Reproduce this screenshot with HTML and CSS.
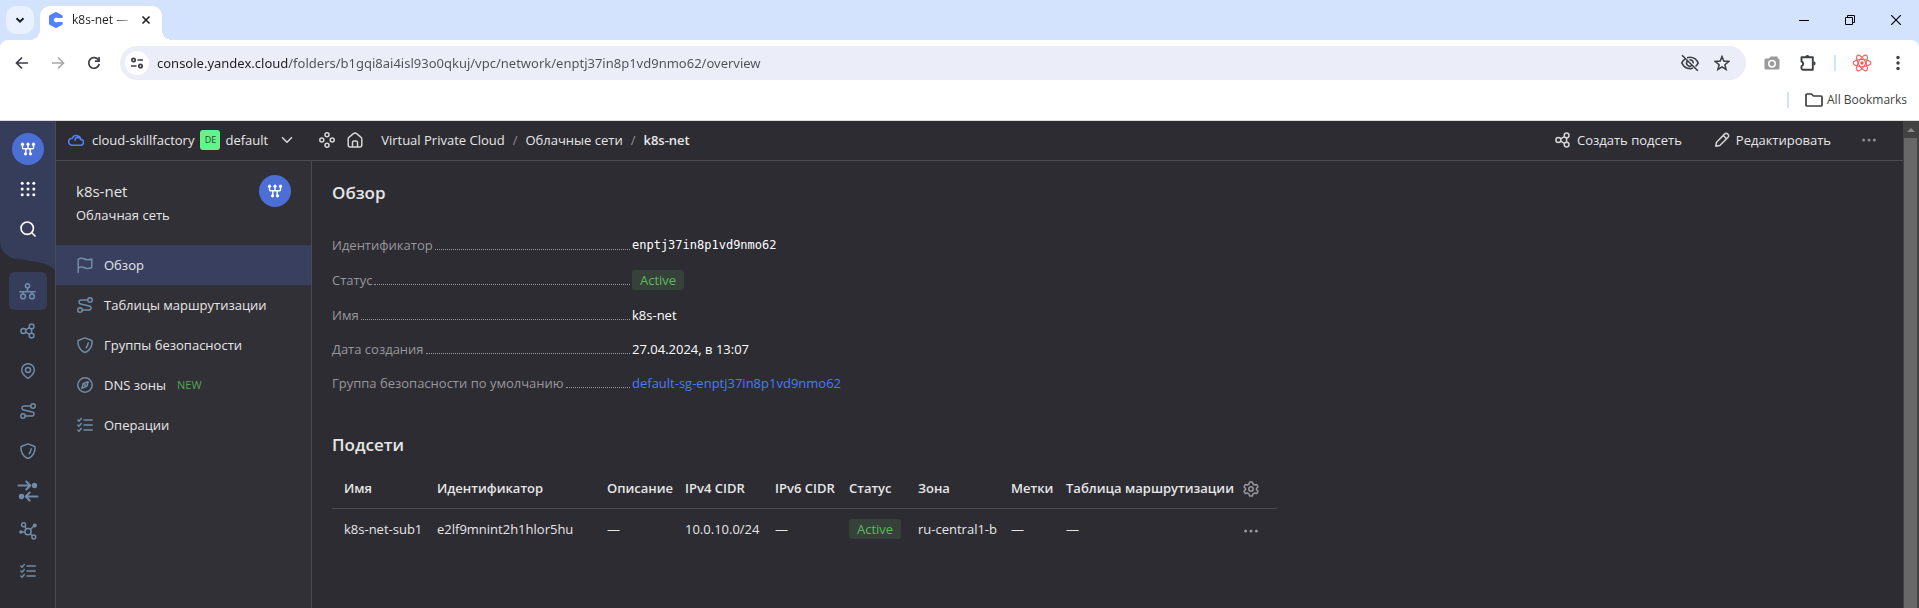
FILE: index.html
```html
<!DOCTYPE html>
<html lang="ru">
<head>
<meta charset="utf-8">
<title>k8s-net — Virtual Private Cloud</title>
<meta name="viewport" content="width=device-width, initial-scale=1">
<link rel="stylesheet" href="styles.css">
</head>
<body>
<svg class="sprite" aria-hidden="true">
  <symbol id="i-vpc" viewBox="0 0 16 16"><g fill="none" stroke="currentColor" stroke-width="1.4"><path d="M2.500 3v3.800a1 1 0 0 0 1 1h9a1 1 0 0 0 1-1V3M8 3v4.800M5.800 7.800v5.200M10.200 7.800v5.200"/></g><g fill="currentColor"><circle cx="2.500" cy="3.200" r="1.600"/><circle cx="8" cy="3.200" r="1.600"/><circle cx="13.500" cy="3.200" r="1.600"/><circle cx="5.500" cy="12.800" r="1.600"/><circle cx="10.500" cy="12.800" r="1.600"/></g></symbol>
  <symbol id="i-grid" viewBox="0 0 16 16"><g fill="currentColor"><circle cx="2.2" cy="2.2" r="1.5"/><circle cx="8" cy="2.2" r="1.5"/><circle cx="13.8" cy="2.2" r="1.5"/><circle cx="2.2" cy="8" r="1.5"/><circle cx="8" cy="8" r="1.5"/><circle cx="13.8" cy="8" r="1.5"/><circle cx="2.2" cy="13.8" r="1.5"/><circle cx="8" cy="13.8" r="1.5"/><circle cx="13.8" cy="13.8" r="1.5"/></g></symbol>
  <symbol id="i-search" viewBox="0 0 16 16"><g fill="none" stroke="currentColor" stroke-width="1.6" stroke-linecap="round"><circle cx="7.2" cy="7.2" r="6.2"/><path d="m11.8 11.8 3.2 3.2"/></g></symbol>
  <symbol id="i-net" viewBox="0 0 16 16"><g fill="none" stroke="currentColor" stroke-width="1.5" stroke-linecap="round"><circle cx="8" cy="2.7" r="2"/><path d="M8 4.700v3.600M.8 8.300h14.400M3.800 8.300v1.700M12.200 8.300v1.700"/><circle cx="3.800" cy="12.600" r="2.200"/><circle cx="12.200" cy="12.600" r="2.200"/></g></symbol>
  <symbol id="i-share" viewBox="0 0 16 16"><g fill="none" stroke="currentColor" stroke-width="1.500"><circle cx="3.400" cy="8" r="2.500"/><circle cx="11.600" cy="3.400" r="2.400"/><circle cx="11.600" cy="12.600" r="2.400"/><path d="m5.700 6.800 3.700-2.200M5.700 9.200l3.700 2.200M11.600 5.800v4.400" /></g></symbol>
  <symbol id="i-pin" viewBox="0 0 16 16"><g fill="none" stroke="currentColor" stroke-width="1.500" stroke-linejoin="round"><path d="M14.300 7c0 3.600-3.700 6.600-5.500 7.900a1.300 1.300 0 0 1-1.600 0C5.400 13.600 1.700 10.600 1.700 7a6.300 6.300 0 0 1 12.600 0Z"/><circle cx="8" cy="7" r="2.500"/></g></symbol>
  <symbol id="i-route" viewBox="0 0 16 16"><g fill="none" stroke="currentColor" stroke-width="1.500" stroke-linecap="round"><circle cx="13" cy="3" r="2.250"/><circle cx="3" cy="13" r="2.250"/><path d="M10.700 3H4.300a2 2 0 0 0-.6 4l8.600 2a2 2 0 0 1-.6 4H5.300"/></g></symbol>
  <symbol id="i-shield" viewBox="0 0 16 16"><g fill="none" stroke="currentColor" stroke-width="1.500" stroke-linecap="round" stroke-linejoin="round"><path d="m8 .9 6.200 2.300c.6.200.9.700.9 1.300 0 4.500-2 8.400-6 10.500a2.300 2.300 0 0 1-2.200 0c-4-2.100-6-6-6-10.500 0-.6.300-1.100.9-1.300L8 .9Z"/><path d="M11.200 5.800c-.2 2-.9 3.700-2 4.900"/></g></symbol>
  <symbol id="i-swap" viewBox="0 0 22 22"><g fill="none" stroke="currentColor" stroke-width="2" stroke-linecap="round" stroke-linejoin="round"><path d="M1.500 5.500H13M9.300 1.500l4 4-4 4M20.500 16.500H9M12.700 12.500l-4 4 4 4"/></g><g fill="currentColor"><circle cx="17.500" cy="5.500" r="2.700"/><circle cx="4.500" cy="16.500" r="2.700"/></g></symbol>
  <symbol id="i-hub" viewBox="0 0 18 18"><g fill="none" stroke="currentColor" stroke-width="1.500"><circle cx="9" cy="9.700" r="3.100"/><circle cx="4.600" cy="2.800" r="2"/><circle cx="14.800" cy="15" r="1.900"/><path d="m5.700 4.500 1.700 2.600M11.300 7.500l3.400-3.200M5.900 10H2M11.200 11.800l2.200 2"/></g><g fill="currentColor"><circle cx="15.700" cy="3.400" r="2"/><circle cx="1.900" cy="10" r="1.800"/></g></symbol>
  <symbol id="i-list" viewBox="0 0 16 16"><g fill="none" stroke="currentColor" stroke-width="1.400" stroke-linecap="round" stroke-linejoin="round"><path d="M7 3h8.300M7 8h8.300M7 13h8.300M.8 3.100 2 4.300l2.300-2.800M.8 8.100 2 9.300l2.300-2.800M.8 13.100 2 14.300l2.300-2.800"/></g></symbol>
  <symbol id="i-flag" viewBox="0 0 16 16"><path d="M1.200 15.300V2.400c2-1.800 4-1.500 6.300-.4 2.500 1.200 4.500 1.100 7.300 0v8.500c-2.800 1.300-4.800 1.500-7.300.3-2.300-1.100-4.300-1.200-6.300.3" fill="none" stroke="currentColor" stroke-width="1.500" stroke-linecap="round" stroke-linejoin="round"/></symbol>
  <symbol id="i-compass" viewBox="0 0 16 16"><g fill="none" stroke="currentColor" stroke-width="1.500" stroke-linejoin="round"><circle cx="8" cy="8" r="7.200"/><path d="M11.200 4.800 9.800 9.300 4.800 11.200l1.500-4.700Z"/></g><circle cx="8" cy="8" r="1" fill="currentColor"/></symbol>
  <symbol id="i-cloud" viewBox="0 0 16 16"><path d="M3.800 13.200h8.600a2.900 2.900 0 0 0 .4-5.800A4.500 4.500 0 0 0 4.300 6.200 3.500 3.500 0 0 0 3.800 13.200ZM7 8.200a2.900 2.900 0 0 1 5.600-.8" fill="none" stroke="currentColor" stroke-width="1.500" stroke-linecap="round"/></symbol>
  <symbol id="i-down" viewBox="0 0 16 16"><path d="m3.500 5.700 4.500 4.500 4.500-4.500" fill="none" stroke="currentColor" stroke-width="1.600" stroke-linecap="round" stroke-linejoin="round"/></symbol>
  <symbol id="i-four" viewBox="0 0 16 16"><g fill="none" stroke="currentColor" stroke-width="1.500"><circle cx="8" cy="2.800" r="2"/><circle cx="8" cy="13.200" r="2"/><circle cx="2.800" cy="8" r="2"/><circle cx="13.200" cy="8" r="2"/></g></symbol>
  <symbol id="i-home" viewBox="0 0 16 16"><g fill="none" stroke="currentColor" stroke-width="1.500" stroke-linejoin="round"><path d="M1.200 7.200c0-.8.300-1.500 1-2L6.400 1.700a2.500 2.500 0 0 1 3.200 0l4.200 3.500c.7.500 1 1.200 1 2V13a2 2 0 0 1-2 2H3.200a2 2 0 0 1-2-2Z"/><path d="M5.500 15v-4.500a1.500 1.500 0 0 1 1.500-1.500h2a1.500 1.500 0 0 1 1.500 1.500V15"/></g></symbol>
  <symbol id="i-pencil" viewBox="0 0 16 16"><path d="m1.800 14.200.7-4L10.800 1.900a1.900 1.900 0 0 1 2.700 0l.6.600a1.900 1.900 0 0 1 0 2.700L5.800 13.500ZM9.300 3.500l3.200 3.200" fill="none" stroke="currentColor" stroke-width="1.500" stroke-linejoin="round"/></symbol>
  <symbol id="i-more" viewBox="0 0 16 16"><g fill="currentColor"><circle cx="2.600" cy="8" r="1.500"/><circle cx="8" cy="8" r="1.500"/><circle cx="13.400" cy="8" r="1.500"/></g></symbol>
  <symbol id="i-gear" viewBox="0 0 16 16"><g fill="none" stroke="currentColor" stroke-width="1.500" stroke-linejoin="round"><path d="M6.700 1h2.600l.7 2.100 1.500.9 2.200-.5 1.300 2.300-1.500 1.600v1.300l1.500 1.600-1.300 2.300-2.200-.5-1.500.8-.7 2.100H6.700L6 12.900l-1.500-.8-2.200.5L1 10.300l1.500-1.600V7.400L1 5.800l1.300-2.300 2.200.5L6 3.100Z"/><circle cx="8" cy="8" r="2.200"/></g></symbol>
</svg>

<header class="browser">
  <div class="tabstrip">
    <button class="tab-search" aria-label="Search tabs"><svg width="12" height="12" viewBox="0 0 12 12"><path d="m2.500 4.200 3.500 3.500 3.500-3.500" fill="none" stroke="currentColor" stroke-width="2"/></svg></button>
    <div class="tab">
      <svg width="16" height="16" viewBox="0 0 16 16"><path d="M8 0q.7 0 1.300.4l4.500 2.700q.9.500.9 1.500V6H9.600a2.400 2.400 0 1 0 0 4h5.100v1.400q0 1-.9 1.500l-4.500 2.700Q8 16.400 6.700 15.600l-4.800-2.700Q1 12.400 1 11.400V4.600q0-1 .9-1.500L6.700.4Q7.300 0 8 0Z" fill="#5282ff"/></svg>
      <span class="tab-title">k8s-net —</span>
      <button class="tab-close" aria-label="Close tab"><svg width="10" height="10" viewBox="0 0 10 10"><path d="m1.500 1.500 7 7m0-7-7 7" stroke="currentColor" stroke-width="1.600"/></svg></button>
    </div>
    <div class="window-controls">
      <button aria-label="Minimize"><svg width="10" height="10" viewBox="0 0 10 10"><path d="M0 5.500h10" stroke="currentColor"/></svg></button>
      <button aria-label="Restore"><svg width="10" height="10" viewBox="0 0 10 10"><path d="M.5 2.500h7v7h-7ZM2.500 2.500v-2h7v7h-2" fill="none" stroke="currentColor"/></svg></button>
      <button aria-label="Close"><svg width="10" height="10" viewBox="0 0 10 10"><path d="m0 0 10 10M10 0 0 10" stroke="currentColor" stroke-width="1.200"/></svg></button>
    </div>
  </div>
  <div class="toolbar">
    <button class="tool" aria-label="Back"><svg width="16" height="16" viewBox="0 0 16 16"><path d="M14 8H3M8 2.500 2.500 8 8 13.500" fill="none" stroke="currentColor" stroke-width="1.700"/></svg></button>
    <button class="tool faded" aria-label="Forward"><svg width="16" height="16" viewBox="0 0 16 16"><path d="M2 8h11M8 2.500 13.500 8 8 13.500" fill="none" stroke="currentColor" stroke-width="1.700"/></svg></button>
    <button class="tool" aria-label="Reload"><svg width="16" height="16" viewBox="0 0 16 16"><path d="M12.500 5.100A5.300 5.300 0 1 0 13.200 9" fill="none" stroke="currentColor" stroke-width="1.700"/><path d="M13.900 1.900v5H8.900V5.300h3.300V1.900Z" fill="currentColor"/></svg></button>
    <div class="address">
      <button class="site-info" aria-label="Site information"><svg width="14" height="14" viewBox="0 0 14 14"><g fill="none" stroke="currentColor" stroke-width="1.700"><circle cx="3.500" cy="4" r="1.700"/><path d="M7.500 4H13M1 10h5.500"/><circle cx="10.500" cy="10" r="1.700"/></g></svg></button>
      <input class="url" type="text" aria-label="Address" value="console.yandex.cloud/folders/b1gqi8ai4isl93o0qkuj/vpc/network/enptj37in8p1vd9nmo62/overview">
      <button class="tool" aria-label="Tracking blocked"><svg width="20" height="18" viewBox="0 0 20 18"><g fill="none" stroke="currentColor" stroke-width="1.600"><path d="M7 3.700C8 3.400 9 3.200 10 3.200c3.700 0 6.600 2.200 8.200 5.700a9.400 9.400 0 0 1-2.700 3.600M13 14c-1 .4-2 .6-3 .6-3.700 0-6.600-2.200-8.200-5.700a9.400 9.400 0 0 1 3.300-4.100M2 1.200l15.800 15.600M7.300 7a3.200 3.200 0 0 0 4.500 4.500M9.500 5.800a3.200 3.200 0 0 1 3.700 3.500"/></g></svg></button>
      <button class="tool" aria-label="Bookmark this tab"><svg width="16" height="16" viewBox="0 0 16 16"><path d="m8 1.600 1.800 4.500 4.900.4-3.800 3.200 1.200 4.800L8 11.900l-4.100 2.600 1.200-4.800-3.800-3.200 4.900-.4Z" fill="none" stroke="currentColor" stroke-width="1.500"/></svg></button>
    </div>
    <button class="tool camera" aria-label="Screenshot extension"><svg width="16" height="14" viewBox="0 0 16 14"><path fill-rule="evenodd" d="M2 2.500h3L6.300.8Q6.600.5 7 .5h6q.7 0 .7.700v1.300h.3q1.500 0 1.500 1.500v8q0 1.500-1.500 1.500H2Q.5 13.500.5 12V4Q.5 2.500 2 2.500ZM8 3.700a4 4 0 1 0 0 8 4 4 0 0 0 0-8Z"/><circle cx="8" cy="7.700" r="2.400"/></svg></button>
    <button class="tool" aria-label="Extensions"><svg width="18" height="18" viewBox="0 0 18 18"><path d="M3 3.200h10.800V15.800H3.800q-1.300 0-1.300-1.200v-2.500a2.400 2.400 0 0 0 0-4.600V3.200Z" fill="none" stroke="currentColor" stroke-width="1.900" stroke-linejoin="round"/><path d="M6.400 3a2 2 0 0 1 4 0ZM14.500 7.300a2.100 2.100 0 0 1 0 4.200Z" fill="currentColor"/></svg></button>
    <span class="rule"></span>
    <button class="tool react" aria-label="React Developer Tools"><svg width="20" height="18" viewBox="0 0 20 18"><g fill="none" stroke="currentColor" stroke-width="1.100"><ellipse cx="10" cy="9" rx="8.900" ry="3.500"/><ellipse cx="10" cy="9" rx="8.900" ry="3.500" transform="rotate(60 10 9)"/><ellipse cx="10" cy="9" rx="8.900" ry="3.500" transform="rotate(120 10 9)"/></g><circle cx="10" cy="9" r="1.700" fill="currentColor"/></svg></button>
    <button class="tool" aria-label="Chrome menu"><svg width="16" height="16" viewBox="0 0 16 16"><g fill="currentColor"><circle cx="8" cy="2.500" r="1.700"/><circle cx="8" cy="8" r="1.700"/><circle cx="8" cy="13.500" r="1.700"/></g></svg></button>
  </div>
  <div class="bookmarks">
    <span class="rule"></span>
    <button class="all-bookmarks"><svg width="18" height="14" viewBox="0 0 18 14"><path d="M1 2q0-1 1-1h4.500l2 2H16q1 0 1 1v8q0 1-1 1H2q-1 0-1-1Z" fill="none" stroke="currentColor" stroke-width="1.700"/></svg>All Bookmarks</button>
  </div>
</header>

<div class="app">
  <nav class="rail" aria-label="Сервисы">
    <div class="rail-top">
      <svg class="rail-shape" viewBox="0 0 55 152" preserveAspectRatio="none"><path d="M0 0h55v150c-5-5-11-7-18-8l-19-3C7 138 0 131 0 120Z"/></svg>
      <a class="service-logo" href="#" aria-label="Virtual Private Cloud"><svg width="16" height="16"><use href="#i-vpc"/></svg></a>
      <button aria-label="Все сервисы"><svg width="16" height="16"><use href="#i-grid"/></svg></button>
      <button aria-label="Поиск"><svg width="16" height="16"><use href="#i-search"/></svg></button>
    </div>
    <div class="rail-items">
      <a class="active" href="#" aria-label="Облачные сети"><svg width="17" height="17"><use href="#i-net"/></svg></a>
      <a href="#" aria-label="Подсети"><svg width="16" height="16"><use href="#i-share"/></svg></a>
      <a href="#" aria-label="IP-адреса"><svg width="16" height="16"><use href="#i-pin"/></svg></a>
      <a href="#" aria-label="Таблицы маршрутизации"><svg width="16" height="16"><use href="#i-route"/></svg></a>
      <a href="#" aria-label="Группы безопасности"><svg width="16" height="16"><use href="#i-shield"/></svg></a>
      <a href="#" aria-label="Шлюзы"><svg width="22" height="22"><use href="#i-swap"/></svg></a>
      <a href="#" aria-label="Сервисные подключения"><svg width="18" height="18"><use href="#i-hub"/></svg></a>
      <a href="#" aria-label="Операции"><svg width="16" height="16"><use href="#i-list"/></svg></a>
    </div>
  </nav>

  <div class="workspace">
    <div class="topbar">
      <a class="cloud" href="#"><svg width="16" height="16"><use href="#i-cloud"/></svg>cloud-skillfactory</a>
      <button class="folder"><span class="folder-mark">DE</span>default<svg width="16" height="16"><use href="#i-down"/></svg></button>
      <a class="icon-link" href="#" aria-label="Ресурсы"><svg width="16" height="16"><use href="#i-four"/></svg></a>
      <a class="icon-link" href="#" aria-label="Главная"><svg width="16" height="16"><use href="#i-home"/></svg></a>
      <nav class="crumbs" aria-label="Навигация">
        <a href="#">Virtual Private Cloud</a><span>/</span><a href="#">Облачные сети</a><span>/</span><a class="current" href="#">k8s-net</a>
      </nav>
      <div class="actions">
        <button><svg width="16" height="16"><use href="#i-share"/></svg>Создать подсеть</button>
        <button><svg width="16" height="16"><use href="#i-pencil"/></svg>Редактировать</button>
        <button class="muted" aria-label="Ещё"><svg width="16" height="16"><use href="#i-more"/></svg></button>
      </div>
    </div>

    <div class="columns">
      <aside class="side">
        <div class="side-head">
          <div>
            <div class="side-title">k8s-net</div>
            <div class="side-sub">Облачная сеть</div>
          </div>
          <span class="service-logo"><svg width="16" height="16"><use href="#i-vpc"/></svg></span>
        </div>
        <nav class="side-nav" aria-label="Разделы сети">
          <a class="active" href="#"><svg width="16" height="16"><use href="#i-flag"/></svg>Обзор</a>
          <a href="#"><svg width="16" height="16"><use href="#i-route"/></svg>Таблицы маршрутизации</a>
          <a href="#"><svg width="16" height="16"><use href="#i-shield"/></svg>Группы безопасности</a>
          <a href="#"><svg width="16" height="16"><use href="#i-compass"/></svg>DNS зоны<span class="new">NEW</span></a>
          <a href="#"><svg width="16" height="16"><use href="#i-list"/></svg>Операции</a>
        </nav>
      </aside>

      <main class="content">
        <h1>Обзор</h1>
        <dl class="props">
          <div><dt>Идентификатор</dt><dd class="mono">enptj37in8p1vd9nmo62</dd></div>
          <div><dt>Статус</dt><dd><span class="status">Active</span></dd></div>
          <div><dt>Имя</dt><dd>k8s-net</dd></div>
          <div><dt>Дата создания</dt><dd>27.04.2024, в 13:07</dd></div>
          <div><dt>Группа безопасности по умолчанию</dt><dd><a href="#">default-sg-enptj37in8p1vd9nmo62</a></dd></div>
        </dl>
        <h2>Подсети</h2>
        <table class="subnets">
          <colgroup><col class="c-name"><col class="c-id"><col class="c-desc"><col class="c-v4"><col class="c-v6"><col class="c-status"><col class="c-zone"><col class="c-labels"><col class="c-route"><col class="c-menu"></colgroup>
          <thead><tr><th>Имя</th><th>Идентификатор</th><th>Описание</th><th>IPv4 CIDR</th><th>IPv6 CIDR</th><th>Статус</th><th>Зона</th><th>Метки</th><th>Таблица маршрутизации</th><th class="menu"><button aria-label="Настройки таблицы"><svg width="16" height="16"><use href="#i-gear"/></svg></button></th></tr></thead>
          <tbody><tr><td>k8s-net-sub1</td><td>e2lf9mnint2h1hlor5hu</td><td>—</td><td>10.0.10.0/24</td><td>—</td><td><span class="status">Active</span></td><td>ru-central1-b</td><td>—</td><td>—</td><td class="menu"><button aria-label="Действия"><svg width="16" height="16"><use href="#i-more"/></svg></button></td></tr></tbody>
        </table>
      </main>
    </div>
  </div>

  <div class="scrollbar" aria-hidden="true"><span class="scroll-up"></span><span class="scroll-thumb"></span></div>
</div>
</body>
</html>
```
FILE: styles.css
```css
* { box-sizing: border-box; }

body {
  margin: 0;
  min-height: 100vh;
  display: flex;
  flex-direction: column;
  background: #2d2c33;
  color: #e6e6e7;
  font: 500 13px/20px "Open Sans", "Noto Sans", sans-serif;
}

.sprite { position: absolute; width: 0; height: 0; }
svg { display: block; flex: none; }
a { color: inherit; text-decoration: none; }
button {
  display: inline-flex;
  align-items: center;
  justify-content: center;
  padding: 0;
  border: 0;
  background: none;
  color: inherit;
  font: inherit;
}

/* Browser frame */
.browser {
  background: #fff;
  border-bottom: 1px solid #dcdcdc;
  color: #3c3f43;
  font: 400 12px/16px "Open Sans", "Noto Sans", sans-serif;
}
.tabstrip {
  position: relative;
  z-index: 1;
  display: flex;
  align-items: flex-start;
  height: 40px;
  padding-left: 6px;
  background: #d3e3fd;
}
.tab-search {
  width: 28px;
  height: 28px;
  margin: 6px 6px 0 0;
  border-radius: 10px;
  background: #e9f1fe;
  color: #1f1f1f;
}
.tab {
  position: relative;
  display: flex;
  align-items: center;
  width: 122px;
  height: 34px;
  margin-top: 6px;
  padding: 0 10px 6px 8px;
  border-radius: 10px 10px 0 0;
  background: #fff;
}
.tab::before,
.tab::after {
  content: "";
  position: absolute;
  bottom: 0;
  width: 10px;
  height: 10px;
}
.tab::before { right: 100%; background: radial-gradient(circle at 0 0, #d3e3fd 10px, #fff 10px); }
.tab::after { left: 100%; background: radial-gradient(circle at 100% 0, #d3e3fd 10px, #fff 10px); }
.tab-title {
  flex: 1;
  margin-left: 8px;
  white-space: nowrap;
  color: #1f1f1f;
  -webkit-mask-image: linear-gradient(90deg, #000 40px, #0006 56px);
  mask-image: linear-gradient(90deg, #000 40px, #0006 56px);
}
.tab-close { width: 12px; height: 16px; color: #1f1f1f; }
.window-controls { display: flex; margin-left: auto; color: #000; }
.window-controls button { width: 46px; height: 40px; }

.toolbar {
  display: flex;
  align-items: center;
  gap: 8px;
  padding: 6px 7px 0 8px;
  border-radius: 8px 8px 0 0;
  background: #fff;
  box-shadow: 0 -8px 0 #d3e3fd;
  height: 40px;
}
.tool { width: 28px; height: 28px; color: #3c3f43; }
.faded { color: #a8a8a8; }
.address {
  flex: 1;
  display: flex;
  align-items: center;
  gap: 4px;
  height: 34px;
  margin: 0 4px;
  padding: 0 10px 0 5px;
  border-radius: 17px;
  background: #ebeef8;
}
.site-info { width: 24px; height: 24px; border-radius: 50%; background: #fff; }
.url {
  flex: 1;
  min-width: 0;
  padding: 0 0 0 4px;
  border: 0;
  outline: 0;
  font: 400 13px/20px "Noto Sans", "Open Sans", sans-serif;
  color: transparent;
  background: linear-gradient(90deg, #1f1f1f 135px, #4d5055 135px);
  -webkit-background-clip: text;
  background-clip: text;
}
.camera svg { fill: #9a9a9a; }
.react { color: #f25b5b; }
.rule { width: 2px; height: 16px; background: #d3e3fd; }
.toolbar .rule { margin: 0 4px; }
.bookmarks {
  display: flex;
  align-items: center;
  justify-content: flex-end;
  gap: 16px;
  height: 40px;
  padding-right: 12px;
}
.all-bookmarks { gap: 4px; }

/* Console */
.app { flex: 1; display: flex; }
.rail {
  width: 56px;
  border-right: 1px solid #4a4a52;
  color: #6f8ca8;
}
.rail-top {
  position: relative;
  display: flex;
  flex-direction: column;
  align-items: center;
  height: 151px;
  padding-top: 12px;
  color: #fff;
}
.rail-top button { position: relative; width: 40px; height: 40px; }
.rail-top .service-logo { position: relative; margin-bottom: 4px; }
.rail-shape { position: absolute; top: 0; left: 0; width: 100%; height: 100%; fill: #353d5b; }
.service-logo {
  display: flex;
  align-items: center;
  justify-content: center;
  width: 32px;
  height: 32px;
  border-radius: 50%;
  background: #4c6fd5;
  color: #fff;
}
.rail-items { display: flex; flex-direction: column; align-items: center; gap: 2px; }
.rail-items a {
  display: flex;
  align-items: center;
  justify-content: center;
  width: 38px;
  height: 38px;
  border-radius: 6px;
}
.rail-items .active { background: #353d5b; }

.workspace { flex: 1; display: flex; flex-direction: column; min-width: 0; }
.topbar {
  display: flex;
  align-items: center;
  height: 40px;
  padding: 0 26px 1px 12px;
  border-bottom: 1px solid #4a4a52;
  white-space: nowrap;
}
.topbar svg { color: #d5d5d7; }
.cloud { display: flex; align-items: center; gap: 8px; }
.topbar .cloud svg { color: #5282ff; }
.folder { gap: 5px; margin-left: 6px; }
.folder svg { margin-left: 6px; }
.folder-mark {
  display: flex;
  align-items: center;
  justify-content: center;
  width: 20px;
  height: 20px;
  border-radius: 3px;
  background: #63f58b;
  color: #1f4a2e;
  font-size: 9px;
}
.icon-link { margin-left: 12px; }
.folder + .icon-link { margin-left: 24px; }
.crumbs { display: flex; gap: 8px; margin-left: 18px; }
.crumbs span { color: #8e8e92; }
.crumbs .current { font-weight: 600; }
.actions { display: flex; gap: 32px; margin-left: auto; }
.actions button { gap: 6px; }
.topbar .muted svg { color: #8e8e92; }
.actions .muted { margin-left: -2px; }

.columns { flex: 1; display: flex; }
.side { width: 256px; background: #313036; border-right: 1px solid #4a4a52; }
.side-head {
  display: flex;
  justify-content: space-between;
  align-items: flex-start;
  height: 84px;
  padding: 14px 20px 0;
}
.side-title { font-size: 15px; line-height: 32px; }
.side-sub { line-height: 16px; }
.side-nav a {
  display: flex;
  align-items: center;
  gap: 11px;
  height: 40px;
  padding-left: 21px;
}
.side-nav svg { color: #6f8ca8; }
.side-nav .active { background: #383f5f; }
.new { color: #54a853; font-size: 11px; }

.content { flex: 1; padding: 20px; }
h1, h2 { margin: 0; font-size: 17px; line-height: 24px; font-weight: 600; }
.props { margin: 0; padding: 23px 0 33px; width: 600px; }
.props div { display: flex; align-items: center; padding: 7px 0; }
.props dt { display: flex; align-items: baseline; width: 300px; color: #98979b; white-space: nowrap; }
.props dt::after {
  content: "";
  flex: 1;
  margin: 0 2px;
  border-bottom: 1px dotted #98979b;
}
.props dd { margin: 0; color: #fff; }
.props a { color: #4b78ff; }
.props .mono { font: 400 12px/20px "DejaVu Sans Mono", monospace; }
.status {
  display: block;
  width: max-content;
  margin: 1px 0;
  padding: 0 8px;
  border-radius: 3px;
  background: #364139;
  color: #5fb85d;
  line-height: 20px;
}

.subnets {
  width: 945px;
  margin-top: 11px;
  table-layout: fixed;
  border-collapse: collapse;
  white-space: nowrap;
}
.subnets th, .subnets td { height: 42px; padding: 0 0 0 12px; text-align: left; }
.subnets th { height: 40px; font-weight: 600; border-bottom: 1px solid #4a4a52; }
.subnets td { font-weight: 500; }
.subnets .menu { padding: 0 18px; color: #98979b; }
.subnets .menu button { vertical-align: middle; }
.c-name { width: 93px; }
.c-id { width: 170px; }
.c-desc { width: 78px; }
.c-v4 { width: 90px; }
.c-v6 { width: 74px; }
.c-status { width: 69px; }
.c-zone { width: 93px; }
.c-labels { width: 55px; }
.c-menu { width: 52px; }

.scrollbar {
  display: flex;
  flex-direction: column;
  align-items: center;
  width: 16px;
  padding-right: 1px;
  background: #424242;
}
.scroll-up { height: 17px; display: flex; align-items: center; }
.scroll-up::before {
  content: "";
  border: 4px solid transparent;
  border-top: 0;
  border-bottom-color: #8a8a8a;
}
.scroll-thumb { flex: 1; width: 13px; background: #686868; }
```
